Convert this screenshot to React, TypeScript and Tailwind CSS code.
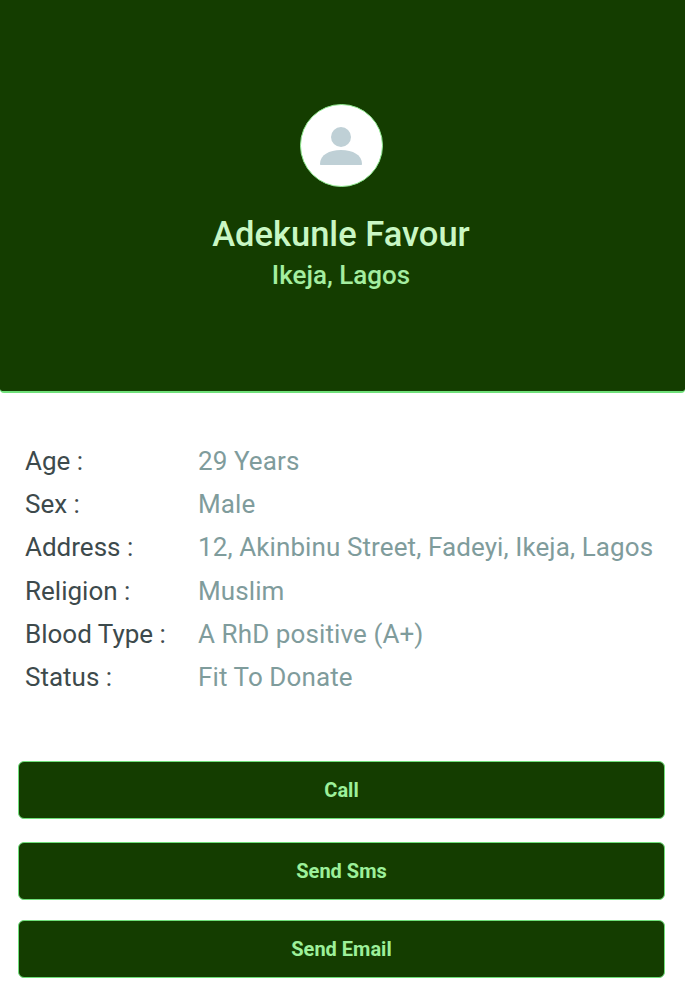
const details = [
  { label: 'Age :', value: '29 Years' },
  { label: 'Sex :', value: 'Male' },
  { label: 'Address :', value: '12, Akinbinu Street, Fadeyi, Ikeja, Lagos' },
  { label: 'Religion :', value: 'Muslim' },
  { label: 'Blood Type :', value: 'A RhD positive (A+)' },
  { label: 'Status :', value: 'Fit To Donate' },
];

function Avatar() {
  return (
    <div className="flex h-[83px] w-[83px] items-center justify-center rounded-full border border-[#8fe88f] bg-white">
      <svg width="42" height="42" viewBox="0 0 42 42" fill="#bfd0d6">
        <circle cx="21" cy="12" r="10" />
        <path d="M0 39c0-9 9-14 21-14s21 5 21 14c0 .6-.4 1-1 1H1c-.6 0-1-.4-1-1z" />
      </svg>
    </div>
  );
}

export default function App() {
  return (
    <div className="h-[998px] w-[685px] overflow-hidden bg-white font-['Roboto',sans-serif]">
      <header className="flex h-[393px] flex-col items-center rounded-b-[4px] border-b-2 border-[#6fe07a] bg-[#143d00] pt-[104px] pr-[3px]">
        <Avatar />
        <h1 className="mt-[24px] text-[34.5px] leading-[46px] font-medium text-[#c9f7c4]">Adekunle Favour</h1>
        <p className="mt-[2px] text-[26px] leading-[32px] font-medium text-[#a4eea0]">Ikeja, Lagos</p>
      </header>

      <dl className="mt-[47px] pl-[25px]">
        {details.map((row) => (
          <div key={row.label} className="flex h-[43.2px] items-center text-[26px]">
            <dt className="w-[173px] text-[#3d4a4c]">{row.label}</dt>
            <dd className="tracking-[0.1px] text-[#7f9c9c]">{row.value}</dd>
          </div>
        ))}
      </dl>

      <div className="mt-[62px] flex flex-col px-[18px] pr-[20px]">
        <button className="h-[58px] rounded-[6px] border border-[#6fe07a] bg-[#143d00] text-[20px] font-bold text-[#9cf09a]">Call</button>
        <button className="mt-[23px] h-[58px] rounded-[6px] border border-[#6fe07a] bg-[#143d00] text-[20px] font-bold text-[#9cf09a]">Send Sms</button>
        <button className="mt-[20px] h-[58px] rounded-[6px] border border-[#6fe07a] bg-[#143d00] text-[20px] font-bold text-[#9cf09a]">Send Email</button>
      </div>
    </div>
  );
}
